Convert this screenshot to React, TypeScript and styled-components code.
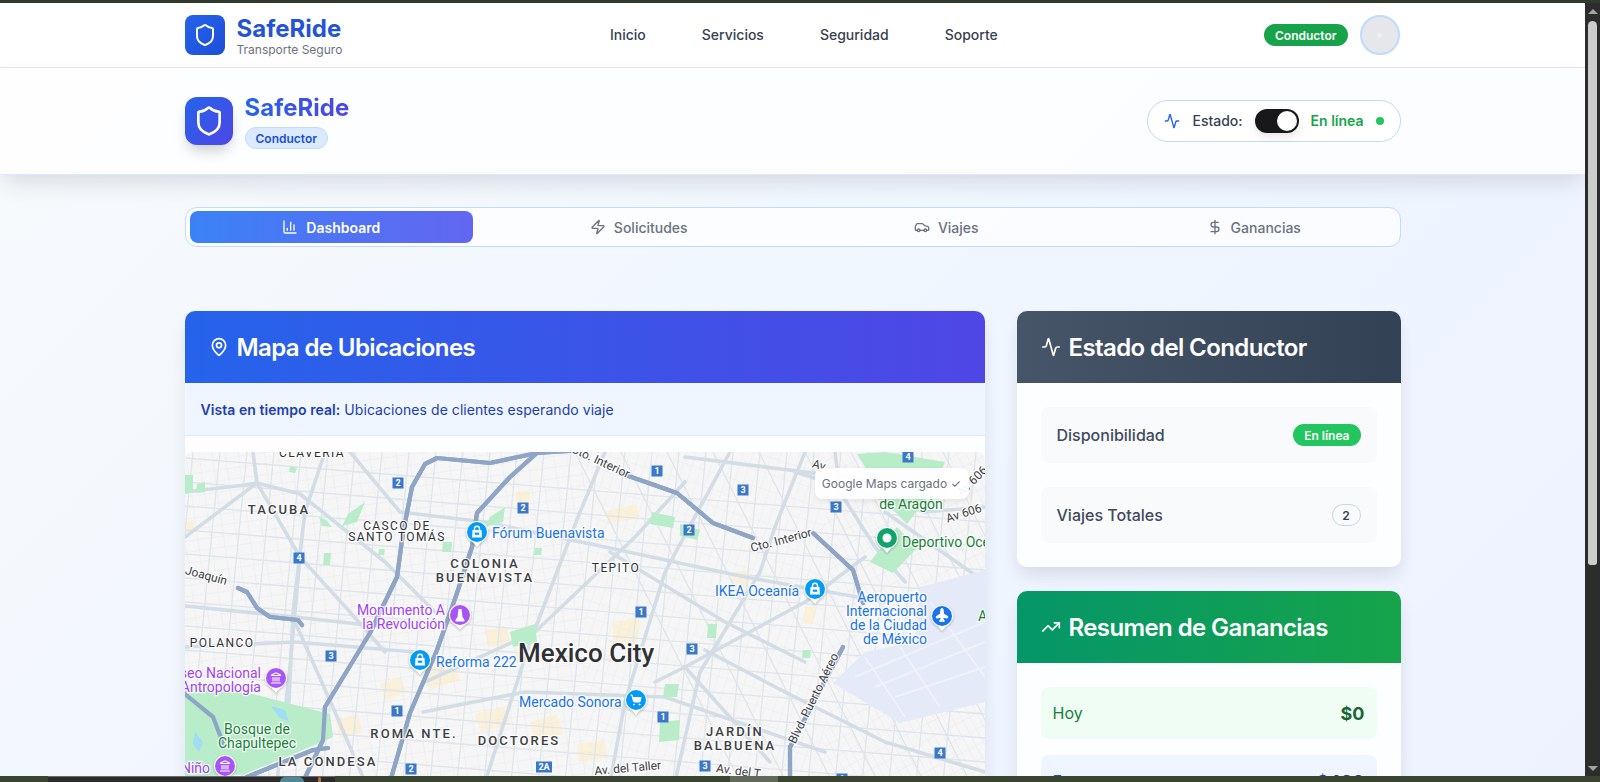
import React from 'react';
import styled, { createGlobalStyle } from 'styled-components';
import {
  Activity,
  BarChart3,
  Car,
  DollarSign,
  Landmark,
  MapPin,
  Plane,
  Shield,
  ShoppingCart,
  TrendingUp,
  Zap,
} from 'lucide-react';

const GlobalStyle = createGlobalStyle`
  html, body {
    margin: 0;
    height: 100%;
    overflow: hidden;
    font-family: Inter, "Liberation Sans", sans-serif;
  }
  * { box-sizing: border-box; }
`;

// ===== Window chrome =====

const Frame = styled.div`
  height: 100vh;
  display: flex;
  flex-direction: column;
  background: #3a4531;
`;

const TopStrip = styled.div`
  flex: 0 0 3px;
  background: #2f3a2c;
`;

const Viewport = styled.div`
  flex: 1;
  min-height: 0;
  display: flex;
`;

const Page = styled.div`
  flex: 1;
  min-width: 0;
  overflow: hidden;
  background: linear-gradient(135deg, #f8fafc 0%, #eff6ff 55%, #eef2ff 100%);
`;

const ScrollTrack = styled.div`
  flex: 0 0 15px;
  background: #2c2c2c;
  display: flex;
  flex-direction: column;
  align-items: center;
  padding: 6px 0 5px;
`;

const ScrollArrow = styled.div<{ $down?: boolean }>`
  width: 0;
  height: 0;
  border-left: 5px solid transparent;
  border-right: 5px solid transparent;
  ${({ $down }) => ($down ? 'border-top: 5px solid #a3a3a3;' : 'border-bottom: 5px solid #a3a3a3;')}
`;

const ScrollThumb = styled.div`
  width: 9px;
  height: 544px;
  margin-top: 7px;
  margin-bottom: auto;
  background: #cdcdcd;
  border-radius: 5px 5px 3px 3px;
`;

const BottomStrip = styled.div`
  flex: 0 0 6px;
  display: flex;
  background: #3a4531;
`;

const TaskWindow = styled.div`
  width: 287px;
  margin-left: 48px;
  background: #2b2b2b;
  border-top: 1px solid #6a6a6a;
  display: flex;
  justify-content: flex-end;
  gap: 14px;
  padding-right: 14px;
`;

const TaskBlob = styled.div<{ $color: string; $width: number }>`
  width: ${({ $width }) => $width}px;
  border-radius: 6px 6px 0 0;
  background: ${({ $color }) => $color};
`;

const TaskThumb = styled.div`
  width: 48px;
  margin-left: 395px;
  background: #5f6a57;
`;

// ===== Top navigation =====

const Container = styled.div`
  width: 1216px;
  margin: 0 auto;
`;

const NavBar = styled.nav`
  height: 65px;
  background: #fff;
  border-bottom: 1px solid #e5e7eb;
`;

const NavInner = styled(Container)`
  height: 64px;
  display: flex;
  align-items: center;
  position: relative;
`;

const Brand = styled.div`
  display: flex;
  align-items: center;
  gap: 12px;
  width: 425.5px;
`;

const BrandIcon = styled.div`
  width: 40px;
  height: 40px;
  border-radius: 8px;
  background: linear-gradient(135deg, #2563eb, #1d4ed8);
  display: flex;
  align-items: center;
  justify-content: center;
  color: #fff;
`;

const BrandName = styled.div`
  padding-top: 1px;
  font-size: 24px;
  line-height: 28px;
  font-weight: 700;
  color: #2553d8;
`;

const BrandTag = styled.div`
  font-size: 12px;
  line-height: 13px;
  color: #6b7280;
`;

const NavLinks = styled.div`
  display: flex;
  gap: 56px;
  padding-bottom: 2px;
`;

const NavLink = styled.a`
  font-size: 14px;
  font-weight: 500;
  color: #374151;
`;

const NavRight = styled.div`
  margin-left: auto;
  display: flex;
  align-items: center;
  gap: 12px;
  padding-right: 1px;
`;

const Pill = styled.span<{ $bg: string }>`
  display: inline-flex;
  align-items: center;
  height: 22px;
  padding: 0 11px;
  border-radius: 999px;
  background: ${({ $bg }) => $bg};
  color: #fff;
  font-size: 12px;
  font-weight: 600;
`;

const Avatar = styled.div`
  width: 40px;
  height: 40px;
  border-radius: 50%;
  background: #e5e7eb;
  border: 2px solid #bfdbfe;
  display: flex;
  align-items: center;
  justify-content: center;

  &::after {
    content: "";
    width: 5px;
    height: 5px;
    border-radius: 50%;
    background: #eeeff1;
  }
`;

// ===== Driver header =====

const DriverHeader = styled.header`
  height: 107px;
  background: rgba(255, 255, 255, 0.8);
  border-bottom: 1px solid #dbeafe;
  box-shadow: 0 10px 22px -4px rgba(15, 23, 42, 0.14);
`;

const HeaderInner = styled(Container)`
  height: 105px;
  display: flex;
  align-items: center;
  justify-content: space-between;
`;

const HeaderBrand = styled.div`
  display: flex;
  align-items: center;
  gap: 12px;
`;

const HeaderIcon = styled.div`
  width: 48px;
  height: 48px;
  border-radius: 12px;
  background: linear-gradient(135deg, #2563eb, #4f46e5);
  box-shadow: 0 8px 14px -3px rgba(15, 23, 42, 0.22);
  display: flex;
  align-items: center;
  justify-content: center;
  color: #fff;
`;

const HeaderTitle = styled.h1`
  margin: 1px 0 4px;
  font-size: 24px;
  line-height: 30px;
  font-weight: 700;
  background: linear-gradient(90deg, #2563eb, #4f46e5);
  -webkit-background-clip: text;
  background-clip: text;
  color: transparent;
`;

const RoleBadge = styled.span`
  display: inline-flex;
  align-items: center;
  height: 22px;
  padding: 0 10px;
  border-radius: 999px;
  background: #dbeafe;
  border: 1px solid #bfdbfe;
  color: #1d4ed8;
  font-size: 12px;
  font-weight: 600;
`;

const StatusBox = styled.div`
  height: 42px;
  display: flex;
  align-items: center;
  padding: 0 16px;
  border: 1px solid #bfdbfe;
  border-radius: 999px;
  background: #fff;
  color: #2563eb;
`;

const StatusLabel = styled.span`
  margin: 0 12px;
  font-size: 14px;
  font-weight: 500;
  color: #374151;
`;

const Toggle = styled.div`
  position: relative;
  width: 44px;
  height: 24px;
  border-radius: 999px;
  background: #18181b;
  box-shadow: 0 4px 8px rgba(0, 0, 0, 0.1);

  &::after {
    content: "";
    position: absolute;
    top: 2px;
    right: 2px;
    width: 20px;
    height: 20px;
    border-radius: 50%;
    background: #fff;
  }
`;

const OnlineText = styled.span`
  margin: 0 12px;
  font-size: 14px;
  font-weight: 600;
  color: #16a34a;
`;

const OnlineDot = styled.span`
  width: 8px;
  height: 8px;
  border-radius: 50%;
  background: #22c55e;
`;

// ===== Tabs =====

const Tabs = styled(Container)`
  margin-top: 32px;
  height: 40px;
  padding: 3px 4px;
  display: grid;
  grid-template-columns: repeat(4, 1fr);
  gap: 24px;
  background: rgba(255, 255, 255, 0.7);
  border: 1px solid #bfdbfe;
  border-radius: 12px;
`;

const Tab = styled.div<{ $active?: boolean }>`
  display: flex;
  align-items: center;
  justify-content: center;
  gap: 8px;
  border-radius: 8px;
  font-size: 14px;
  font-weight: ${({ $active }) => ($active ? 600 : 500)};
  color: ${({ $active }) => ($active ? '#fff' : '#6b7280')};
  background: ${({ $active }) => ($active ? 'linear-gradient(90deg, #3b82f6, #6366f1)' : 'transparent')};
`;

// ===== Cards =====

const Columns = styled(Container)`
  margin-top: 64px;
  display: grid;
  grid-template-columns: 800px 384px;
  gap: 32px;
  align-items: start;
`;

const SideColumn = styled.div`
  display: flex;
  flex-direction: column;
  gap: 24px;
`;

const Card = styled.section`
  border-radius: 10px;
  background: rgba(255, 255, 255, 0.85);
  box-shadow: 0 10px 18px -3px rgba(15, 23, 42, 0.12);
  overflow: hidden;
`;

const CardHeader = styled.div<{ $from: string; $to: string }>`
  height: 72px;
  display: flex;
  align-items: center;
  padding: 0 24px;
  gap: 8px;
  background: linear-gradient(90deg, ${({ $from }) => $from}, ${({ $to }) => $to});
  color: #fff;
`;

const CardTitle = styled.h2`
  margin: 0;
  font-size: 24px;
  font-weight: 600;
  letter-spacing: -0.6px;
  color: #fff;
`;

const InfoStrip = styled.div`
  height: 53px;
  display: flex;
  align-items: center;
  padding: 0 16px;
  gap: 4px;
  background: #eff6ff;
  border-bottom: 1px solid #dbeafe;
  font-size: 14px;
  letter-spacing: 0.06px;
  color: #1e40af;

  strong {
    font-weight: 600;
  }
`;

const MapShell = styled.div`
  margin-top: 16px;
  position: relative;
  height: 500px;
  border-radius: 8px;
  overflow: hidden;
`;

const MapNotice = styled.div`
  position: absolute;
  top: 16px;
  right: 16px;
  height: 31px;
  width: 154px;
  display: flex;
  align-items: center;
  justify-content: center;
  background: rgba(255, 255, 255, 0.94);
  border-radius: 8px;
  box-shadow: 0 2px 6px rgba(0, 0, 0, 0.08);
  font-size: 12px;
  color: #6b7280;
`;

const CardBody = styled.div<{ $gap: number }>`
  padding: 24px;
  display: flex;
  flex-direction: column;
  gap: ${({ $gap }) => $gap}px;
`;

const StatusRow = styled.div`
  height: 56px;
  display: flex;
  align-items: center;
  justify-content: space-between;
  padding: 0 16px;
  border-radius: 8px;
  background: #f9fafb;
  font-size: 16px;
  font-weight: 500;
  color: #3f4a5c;
`;

const CountBadge = styled.span`
  height: 22px;
  min-width: 29px;
  display: inline-flex;
  align-items: center;
  justify-content: center;
  border-radius: 999px;
  border: 1px solid #cbd5e1;
  font-size: 12px;
  font-weight: 600;
  color: #374151;
`;

const EarningRow = styled.div<{ $bg: string; $label: string; $value: string }>`
  height: 52px;
  display: flex;
  align-items: center;
  justify-content: space-between;
  padding: 0 12px;
  border-radius: 8px;
  background: ${({ $bg }) => $bg};
  font-size: 16px;
  color: ${({ $label }) => $label};

  b {
    font-size: 18px;
    font-weight: 700;
    color: ${({ $value }) => $value};
  }
`;

// ===== Map drawing =====

const MapLabel = styled.text<{ $kind: string }>`
  font-family: Roboto, "Liberation Sans", sans-serif;
  paint-order: stroke;
  stroke: rgba(255, 255, 255, 0.85);
  stroke-width: 2.5px;
  ${({ $kind }) => {
    switch ($kind) {
      case 'area':
        return 'font-size: 13px; font-weight: 500; letter-spacing: 2.1px; fill: #3c4043;';
      case 'small':
        return 'font-size: 12px; font-weight: 400; letter-spacing: 1.4px; fill: #303134;';
      case 'city':
        return 'font-size: 26px; font-weight: 500; fill: #303134;';
      case 'poi':
        return 'font-size: 14px; fill: #1a73e8;';
      case 'art':
        return 'font-size: 14px; fill: #a142f4;';
      case 'park':
        return 'font-size: 14px; fill: #188038;';
      default:
        return 'font-size: 12px; fill: #3c4043;';
    }
  }}
`;

const ShieldText = styled.text`
  font-family: Roboto, "Liberation Sans", sans-serif;
  font-size: 9px;
  font-weight: 700;
  fill: #fff;
  text-anchor: middle;
`;

const PinGroup = styled.g`
  filter: drop-shadow(0 1px 1px rgba(0, 0, 0, 0.25));
`;

type Label = [string, number, number, string, ('start' | 'middle' | 'end')?, number?];

const labels: Label[] = [
  ['CLAVERÍA', 127, 5, 'small', 'middle'],
  ['TACUBA', 94, 62, 'area', 'middle'],
  ['CASCO DE', 212, 78, 'small', 'middle'],
  ['SANTO TOMÁS', 212, 89, 'small', 'middle'],
  ['COLONIA', 300, 116, 'area', 'middle'],
  ['BUENAVISTA', 300, 130, 'area', 'middle'],
  ['TEPITO', 431, 120, 'small', 'middle'],
  ['POLANCO', 37, 195, 'small', 'middle'],
  ['ROMA NTE.', 229, 286, 'area', 'middle'],
  ['DOCTORES', 334, 293, 'area', 'middle'],
  ['LA CONDESA', 143, 314, 'area', 'middle'],
  ['JARDÍN', 550, 284, 'area', 'middle'],
  ['BALBUENA', 550, 298, 'area', 'middle'],
  ['Mexico City', 333, 210, 'city'],
  ['Fórum Buenavista', 307, 86, 'poi'],
  ['Reforma 222', 251, 215, 'poi'],
  ['Mercado Sonora', 334, 255, 'poi'],
  ['IKEA Oceanía', 614, 144, 'poi', 'end'],
  ['Aeropuerto', 742, 150, 'poi', 'end'],
  ['Internacional', 742, 164, 'poi', 'end'],
  ['de la Ciudad', 742, 178, 'poi', 'end'],
  ['de México', 742, 192, 'poi', 'end'],
  ['Monumento A', 260, 163, 'art', 'end'],
  ['la Revolución', 260, 177, 'art', 'end'],
  ['Museo Nacional', 76, 226, 'art', 'end'],
  ['de Antropología', 76, 240, 'art', 'end'],
  ['Niño', 25, 321, 'art', 'end'],
  ['Bosque de', 72, 282, 'park', 'middle'],
  ['Chapultepec', 72, 296, 'park', 'middle'],
  ['de Aragón', 726, 57, 'park', 'middle'],
  ['Deportivo Oceanía', 717, 95, 'park'],
  ['A', 793, 169, 'park'],
  ['San Joaquín', 41, 133, 'road', 'end', 15],
  ['Cto. Interior', 414, 13, 'road', 'middle', 25],
  ['Cto. Interior', 597, 92, 'road', 'middle', -15],
  ['Blvd. Puerto Aéreo', 632, 248, 'road', 'middle', -64],
  ['Av 606', 780, 65, 'road', 'middle', -18],
  ['Av. del Taller', 443, 320, 'road', 'middle', -5],
  ['Av. del T', 553, 323, 'road', 'middle', 8],
  ['Av', 633, 17, 'road', 'middle', 15],
  ['Av 606', 790, 32, 'road', 'middle', -45],
];

const shields: [string, number, number][] = [
  ['2', 213, 31], ['2', 338, 56], ['4', 114, 106], ['3', 146, 204], ['1', 212, 259],
  ['2', 226, 317], ['2A', 359, 315], ['1', 472, 19], ['3', 558, 38], ['4', 723, 5],
  ['3', 651, 55], ['2', 504, 78], ['1', 456, 160], ['3', 507, 197], ['1', 478, 265],
  ['3', 520, 314], ['4', 755, 301], ['1', 657, 327],
];

const highways = [
  'M352 1 L305 11 L252 6 L240 12 L227 35 L218 81 L212 125 L185 181 L140 255 L138 288 L118 330',
  'M352 1 L325 25 L292 61 L287 95 L272 141 L252 198 L225 261 L205 330',
  'M53 136 L62 140 L72 156 L85 165 L113 168 L117 173',
  'M-5 238 L28 265 L38 291',
  'M143 296 L128 298 L62 325',
  'M352 1 L400 -2',
  'M435 21 L492 41 L528 71 L568 86',
  'M628 81 L668 118 L678 151',
  'M658 195 L605 295 L605 330',
];

const mainRoads = [
  'M68 0 L72 31 L115 105 L165 160 L200 200',
  'M0 40 L60 33 L72 31 L115 42 L150 70 L200 110 L250 160',
  'M72 31 L0 85',
  'M140 0 L120 60 L108 160 L104 250',
  'M165 0 L215 60 L300 70 L420 95 L560 125 L700 150',
  'M0 154 L110 165 L200 175',
  'M115 105 L105 215 L92 330',
  'M0 195 L110 190 L230 200 L245 210',
  'M110 170 L150 260 L180 330',
  'M420 0 L395 60 L345 190 L300 330',
  'M545 0 L480 120 L440 250 L425 330',
  'M700 30 L620 20 L500 5',
  'M620 0 L590 75 L575 120 L515 220 L490 330',
  'M240 230 L350 180 L450 85 L500 30',
  'M238 260 L340 240 L480 245 L640 300',
  'M680 105 L620 150 L500 215 L470 230',
  'M650 0 L655 40 L690 95 L720 130',
  'M500 215 L585 310',
  'M520 198 L600 240 L700 290 L800 320',
  'M700 60 L800 130',
  'M425 100 L540 170 L620 210',
  'M610 20 L740 60 L800 55',
];

// thinner collector streets, laid out in three families so the grid isn't too even
const collectors = [
  ...Array.from({ length: 30 }, (_, i) => `M${i * 27 + 8} 0 L${i * 27 - 26} 340`),
  ...Array.from({ length: 14 }, (_, i) => `M0 ${i * 24 + 6} L800 ${i * 24 + 70}`),
  ...Array.from({ length: 9 }, (_, i) => `M${i * 46 + 390} 0 L${i * 46 + 560} 340`),
];

const parks = [
  'M0 232 L60 240 L145 262 L148 285 L120 297 L60 322 L0 325 Z',
  'M0 23 L8 23 L8 40 L0 42 Z',
  'M12 32 L20 30 L20 40 L11 41 Z',
  'M672 2 L700 0 L760 10 L748 38 L722 72 L705 55 Z',
  'M685 110 L712 75 L732 96 L708 121 Z',
  'M163 62 L180 50 L172 70 L157 74 Z',
  'M134 65 L141 68 L147 75 L137 74 Z',
  'M105 14 L112 16 L110 21 L104 20 Z',
  'M139 101 L146 101 L145 113 L138 113 Z',
  'M194 97 L200 97 L199 103 L193 103 Z',
  'M467 60 L490 65 L488 76 L465 72 Z',
  'M495 72 L515 78 L512 88 L495 84 Z',
  'M480 232 L494 232 L492 245 L478 245 Z',
  'M475 270 L495 268 L494 288 L474 290 Z',
  'M523 172 L532 172 L531 186 L522 186 Z',
  'M618 198 L626 198 L625 206 L617 206 Z',
  'M258 90 L267 90 L266 100 L257 100 Z',
  'M325 180 L350 172 L352 190 L328 195 Z',
  'M305 65 L320 55 L318 70 L300 75 Z',
  'M350 96 L357 96 L356 103 L349 103 Z',
];

const warm = [
  'M195 232 L215 225 L222 240 L200 248 Z',
  'M240 218 L268 210 L275 228 L245 238 Z',
  'M150 268 L172 262 L178 280 L155 286 Z',
  'M290 262 L320 255 L326 272 L296 280 Z',
  'M345 270 L372 262 L378 282 L350 290 Z',
  'M392 292 L420 288 L422 306 L394 310 Z',
  'M300 178 L322 175 L325 192 L303 195 Z',
  'M428 170 L455 165 L452 190 L428 192 Z',
  'M420 60 L452 52 L454 66 L424 72 Z',
  'M548 120 L565 118 L562 140 L545 142 Z',
  'M620 155 L632 155 L628 172 L618 172 Z',
  'M0 70 L8 68 L10 80 L0 84 Z',
  'M330 40 L345 38 L345 52 L332 54 Z',
];

const airport = 'M648 231 L680 200 L730 190 L735 135 L800 118 L800 250 L715 271 Z';
const airportStrips = [
  'M670 225 L800 170', 'M690 235 L800 190', 'M710 245 L800 215',
  'M680 205 L720 265', 'M715 195 L755 255', 'M745 150 L800 225',
];

const BagIcon: React.FC<{ color: string }> = ({ color }) => (
  <g>
    <path d="M-4.5 -2 H4.5 L5 5.5 H-5 Z" fill="#fff" />
    <path d="M-2.5 -2 V-3.2 A2.5 2.5 0 0 1 2.5 -3.2 V-2" stroke="#fff" strokeWidth="1.4" fill="none" />
    <rect x="-2.2" y="0.6" width="4.4" height="2.2" fill={color} />
  </g>
);

const MapRoads: React.FC = () => (
  <g fill="none" strokeLinecap="round" strokeLinejoin="round">
    {collectors.map(d => (
      <path key={d} d={d} stroke="#e0e5ea" strokeWidth="1.3" />
    ))}
    {mainRoads.map(d => (
      <path key={d} d={d} stroke="#d3dde6" strokeWidth="3.6" />
    ))}
    {highways.map(d => (
      <path key={d} d={d} stroke="#8ea5c6" strokeWidth="4.2" />
    ))}
  </g>
);

const Pin: React.FC<{ x: number; y: number; color: string; children: React.ReactNode }> = ({ x, y, color, children }) => (
  <PinGroup transform={`translate(${x} ${y})`}>
    <path d="M-6 8 L0 15 L6 8 Z" fill="#fff" />
    <circle r="11" fill="#fff" />
    <circle r="10" fill={color} />
    {children}
  </PinGroup>
);

const CityMap: React.FC = () => (
  <svg width="800" height="500" viewBox="0 0 800 500" role="img">
    <defs>
      <pattern id="blocksA" width="13" height="11" patternUnits="userSpaceOnUse" patternTransform="rotate(-8)">
        <path d="M0 0H13M0 0V11" stroke="#e4e7eb" strokeWidth="0.8" fill="none" />
      </pattern>
      <pattern id="blocksB" width="9" height="16" patternUnits="userSpaceOnUse" patternTransform="rotate(18)">
        <path d="M0 0H9M0 0V16" stroke="#e5e8ec" strokeWidth="0.8" fill="none" />
      </pattern>
      <pattern id="blocksC" width="8" height="14" patternUnits="userSpaceOnUse" patternTransform="rotate(-28)">
        <path d="M0 0H8M0 0V14" stroke="#e3e7ec" strokeWidth="0.8" fill="none" />
      </pattern>
    </defs>
    <rect width="800" height="500" fill="#f6f6f7" />
    {warm.map(d => (
      <path key={d} d={d} fill="#fbf1d9" />
    ))}
    <rect width="400" height="500" fill="url(#blocksA)" />
    <rect x="400" width="240" height="500" fill="url(#blocksB)" />
    <rect x="640" width="160" height="500" fill="url(#blocksC)" />
    <MapRoads />
    <path d={airport} fill="#e4eaf8" />
    <path d={airportStrips.join(' ')} stroke="#eff2fb" strokeWidth="2" fill="none" />
    {parks.map(d => (
      <path key={d} d={d} fill="#b9ecc9" />
    ))}
    <path d="M86 254 L100 258 L104 270 L94 265 Z M10 280 L18 290 L14 300 L8 292 Z" fill="#9fdcf5" />
    <g fill="none" strokeLinecap="round" strokeLinejoin="round">
      {highways.map(d => (
        <path key={d} d={d} stroke="#8ea5c6" strokeWidth="4.2" />
      ))}
    </g>
    {labels.map(([text, x, y, kind, anchor, angle]) => (
      <MapLabel
        key={`${text}-${x}`}
        $kind={kind}
        x={x}
        y={y}
        textAnchor={anchor ?? 'start'}
        transform={angle ? `rotate(${angle} ${x} ${y})` : undefined}
      >
        {text}
      </MapLabel>
    ))}
    {shields.map(([text, x, y]) => (
      <g key={`${text}-${x}`}>
        <rect x={x - (text.length > 1 ? 8 : 5.5)} y={y - 5.5} width={text.length > 1 ? 16 : 11} height="11" fill="#3b78c9" />
        <ShieldText x={x} y={y + 3.3}>{text}</ShieldText>
      </g>
    ))}
    <Pin x={292} y={80} color="#039bf3"><BagIcon color="#039bf3" /></Pin>
    <Pin x={235} y={208} color="#039bf3"><BagIcon color="#039bf3" /></Pin>
    <Pin x={630} y={137} color="#039bf3"><BagIcon color="#039bf3" /></Pin>
    <Pin x={451} y={248} color="#039bf3"><ShoppingCart x={-6} y={-6} size={12} color="#fff" fill="#fff" /></Pin>
    <Pin x={275} y={163} color="#a855f7"><path d="M-1.5 -6 H1.5 L2.5 2 L4.5 5 V6.5 H-4.5 V5 L-2.5 2 Z" fill="#fff" /></Pin>
    <Pin x={91} y={226} color="#a855f7"><Landmark x={-6} y={-6} size={12} color="#fff" strokeWidth={2.2} /></Pin>
    <Pin x={40} y={314} color="#a855f7"><Landmark x={-6} y={-6} size={12} color="#fff" strokeWidth={2.2} /></Pin>
    <Pin x={757} y={164} color="#1a73e8">
      <g transform="rotate(-45)"><Plane x={-7} y={-7} size={14} color="#fff" fill="#fff" /></g>
    </Pin>
    <Pin x={702} y={86} color="#12a36b"><circle r="4.5" fill="#fff" /></Pin>
  </svg>
);

export default function App() {
  return (
    <Frame>
      <GlobalStyle />
      <TopStrip />
      <Viewport>
        <Page>
          <NavBar>
            <NavInner>
              <Brand>
                <BrandIcon><Shield size={24} strokeWidth={2} /></BrandIcon>
                <div>
                  <BrandName>SafeRide</BrandName>
                  <BrandTag>Transporte Seguro</BrandTag>
                </div>
              </Brand>
              <NavLinks>
                <NavLink>Inicio</NavLink>
                <NavLink>Servicios</NavLink>
                <NavLink>Seguridad</NavLink>
                <NavLink>Soporte</NavLink>
              </NavLinks>
              <NavRight>
                <Pill $bg="#16a34a">Conductor</Pill>
                <Avatar />
              </NavRight>
            </NavInner>
          </NavBar>

          <DriverHeader>
            <HeaderInner>
              <HeaderBrand>
                <HeaderIcon><Shield size={32} strokeWidth={2} /></HeaderIcon>
                <div>
                  <HeaderTitle>SafeRide</HeaderTitle>
                  <RoleBadge>Conductor</RoleBadge>
                </div>
              </HeaderBrand>
              <StatusBox>
                <Activity size={16} strokeWidth={2} />
                <StatusLabel>Estado:</StatusLabel>
                <Toggle />
                <OnlineText>En línea</OnlineText>
                <OnlineDot />
              </StatusBox>
            </HeaderInner>
          </DriverHeader>

          <Tabs>
            <Tab $active><BarChart3 size={16} />Dashboard</Tab>
            <Tab><Zap size={16} />Solicitudes</Tab>
            <Tab><Car size={16} />Viajes</Tab>
            <Tab><DollarSign size={16} />Ganancias</Tab>
          </Tabs>

          <Columns>
            <Card>
              <CardHeader $from="#2563eb" $to="#4f46e5">
                <MapPin size={20} strokeWidth={2} />
                <CardTitle>Mapa de Ubicaciones</CardTitle>
              </CardHeader>
              <InfoStrip>
                <strong>Vista en tiempo real:</strong> Ubicaciones de clientes esperando viaje
              </InfoStrip>
              <MapShell>
                <CityMap />
                <MapNotice>Google Maps cargado ✓</MapNotice>
              </MapShell>
            </Card>

            <SideColumn>
              <Card>
                <CardHeader $from="#475569" $to="#334155">
                  <Activity size={20} strokeWidth={2} />
                  <CardTitle>Estado del Conductor</CardTitle>
                </CardHeader>
                <CardBody $gap={24}>
                  <StatusRow>
                    Disponibilidad
                    <Pill $bg="#22c55e">En línea</Pill>
                  </StatusRow>
                  <StatusRow>
                    Viajes Totales
                    <CountBadge>2</CountBadge>
                  </StatusRow>
                </CardBody>
              </Card>

              <Card>
                <CardHeader $from="#059669" $to="#16a34a">
                  <TrendingUp size={20} strokeWidth={2} />
                  <CardTitle>Resumen de Ganancias</CardTitle>
                </CardHeader>
                <CardBody $gap={16}>
                  <EarningRow $bg="#f0fdf4" $label="#15803d" $value="#166534">
                    Hoy <b>$0</b>
                  </EarningRow>
                  <EarningRow $bg="#eff6ff" $label="#1d4ed8" $value="#1e40af">
                    Esta semana <b>$480</b>
                  </EarningRow>
                </CardBody>
              </Card>
            </SideColumn>
          </Columns>
        </Page>
        <ScrollTrack>
          <ScrollArrow />
          <ScrollThumb />
          <ScrollArrow $down />
        </ScrollTrack>
      </Viewport>
      <BottomStrip>
        <TaskWindow>
          <TaskBlob $color="#4f8796" $width={24} />
          <TaskBlob $color="#b5713f" $width={3} />
        </TaskWindow>
        <TaskThumb />
      </BottomStrip>
    </Frame>
  );
}
